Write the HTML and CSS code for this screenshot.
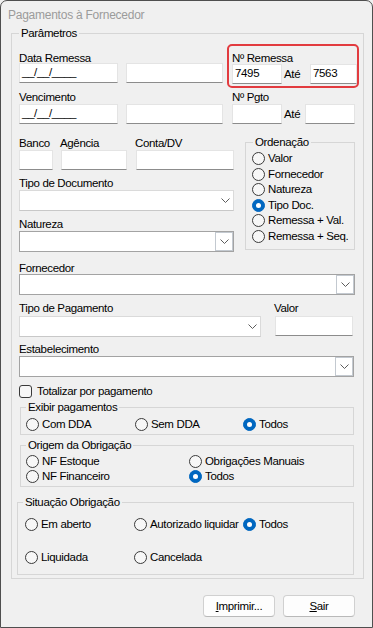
FILE: index.html
```html
<!DOCTYPE html>
<html lang="pt">
<head>
<meta charset="utf-8">
<title>Pagamentos à Fornecedor</title>
<link rel="stylesheet" href="styles.css">
</head>
<body>
<div class="window">
  <div class="titlebar">Pagamentos à Fornecedor</div>
  <fieldset class="grp params">
    <legend>Parâmetros</legend>

    <div class="row row1">
      <div class="field w99 ml7 pt8">
        <span class="lbl">Data Remessa</span>
        <div class="inp up">__/__/____</div>
      </div>
      <div class="field w97 ml8 pt8">
        <span class="lbl"></span>
        <div class="inp up"></div>
      </div>
      <div class="highlight">
        <span class="lbl">Nº Remessa</span>
        <div class="pair">
          <div class="inp w50">7495</div>
          <span class="ate">Até</span>
          <div class="inp w47 push">7563</div>
        </div>
      </div>
    </div>

    <div class="row row2">
      <div class="field w99 ml7">
        <span class="lbl">Vencimento</span>
        <div class="inp dn">__/__/____</div>
      </div>
      <div class="field w97 ml8">
        <span class="lbl"></span>
        <div class="inp dn"></div>
      </div>
      <div class="field pgto">
        <span class="lbl">Nº Pgto</span>
        <div class="pair dn">
          <div class="inp w50"></div>
          <span class="ate">Até</span>
          <div class="inp w50 push"></div>
        </div>
      </div>
    </div>

    <div class="mid">
      <div class="midleft">
        <div class="bankrow">
          <div class="field w34">
            <span class="lbl">Banco</span>
            <div class="inp dn"></div>
          </div>
          <div class="field w66 ml8">
            <span class="lbl lbl-ag">Agência</span>
            <div class="inp dn"></div>
          </div>
          <div class="field w98 ml9">
            <span class="lbl lbl-ag">Conta/DV</span>
            <div class="inp dn"></div>
          </div>
        </div>
        <div class="field mt7">
          <span class="lbl">Tipo de Documento</span>
          <div class="combo plain dn">
            <svg class="chev" width="9" height="5" viewBox="0 0 9 5"><path d="M0.5 0.5 L4.5 4.5 L8.5 0.5" fill="none" stroke="#5c5c5c" stroke-width="1"/></svg>
          </div>
        </div>
        <div class="field mt7">
          <span class="lbl">Natureza</span>
          <div class="combo boxed dn">
            <span class="cbtn"><svg width="9" height="5" viewBox="0 0 9 5"><path d="M0.5 0.5 L4.5 4.5 L8.5 0.5" fill="none" stroke="#5c5c5c" stroke-width="1"/></svg></span>
          </div>
        </div>
      </div>

      <fieldset class="grp ord">
        <legend>Ordenação</legend>
        <div class="ordlist">
          <div class="radio"><span class="dot"></span>Valor</div>
          <div class="radio"><span class="dot"></span>Fornecedor</div>
          <div class="radio"><span class="dot"></span>Natureza</div>
          <div class="radio on"><span class="dot"></span>Tipo Doc.</div>
          <div class="radio"><span class="dot"></span>Remessa + Val.</div>
          <div class="radio"><span class="dot"></span>Remessa + Seq.</div>
        </div>
      </fieldset>
    </div>

    <div class="field forn">
      <span class="lbl">Fornecedor</span>
      <div class="combo boxed">
        <span class="cbtn"><svg width="9" height="5" viewBox="0 0 9 5"><path d="M0.5 0.5 L4.5 4.5 L8.5 0.5" fill="none" stroke="#5c5c5c" stroke-width="1"/></svg></span>
      </div>
    </div>

    <div class="row rowpag">
      <div class="field w242 ml7">
        <span class="lbl">Tipo de Pagamento</span>
        <div class="combo plain dn2">
          <svg class="chev" width="9" height="5" viewBox="0 0 9 5"><path d="M0.5 0.5 L4.5 4.5 L8.5 0.5" fill="none" stroke="#5c5c5c" stroke-width="1"/></svg>
        </div>
      </div>
      <div class="field valor">
        <span class="lbl">Valor</span>
        <div class="inp dn2 valinp"></div>
      </div>
    </div>

    <div class="field estab">
      <span class="lbl">Estabelecimento</span>
      <div class="combo boxed dn">
        <span class="cbtn"><svg width="9" height="5" viewBox="0 0 9 5"><path d="M0.5 0.5 L4.5 4.5 L8.5 0.5" fill="none" stroke="#5c5c5c" stroke-width="1"/></svg></span>
      </div>
    </div>

    <div class="check"><span class="box"></span>Totalizar por pagamento</div>

    <fieldset class="grp sub exibir">
      <legend>Exibir pagamentos</legend>
      <div class="opts cols3a">
        <div class="radio"><span class="dot"></span>Com DDA</div>
        <div class="radio"><span class="dot"></span>Sem DDA</div>
        <div class="radio on"><span class="dot"></span>Todos</div>
      </div>
    </fieldset>

    <fieldset class="grp sub origem">
      <legend>Origem da Obrigação</legend>
      <div class="opts cols2">
        <div class="radio"><span class="dot"></span>NF Estoque</div>
        <div class="radio"><span class="dot"></span>Obrigações Manuais</div>
        <div class="radio"><span class="dot"></span>NF Financeiro</div>
        <div class="radio on"><span class="dot"></span>Todos</div>
      </div>
    </fieldset>

    <fieldset class="grp situacao">
      <legend>Situação Obrigação</legend>
      <div class="opts cols3b">
        <div class="radio"><span class="dot"></span>Em aberto</div>
        <div class="radio"><span class="dot"></span>Autorizado liquidar</div>
        <div class="radio on"><span class="dot"></span>Todos</div>
        <div class="radio"><span class="dot"></span>Liquidada</div>
        <div class="radio"><span class="dot"></span>Cancelada</div>
      </div>
    </fieldset>
  </fieldset>

  <div class="buttons">
    <div class="btn"><span><u>I</u>mprimir...</span></div>
    <div class="btn"><span><u>S</u>air</span></div>
  </div>
</div>
</body>
</html>
```

FILE: styles.css
```css
* { box-sizing: border-box; }
html, body { margin: 0; padding: 0; background: #f0f0f0; }
body {
  font-family: "Liberation Sans", Arial, sans-serif;
  font-size: 11.5px;
  letter-spacing: -0.35px;
  color: #000;
}
.window {
  width: 373px;
  height: 628px;
  border: 1px solid #4f4f4f;
  border-radius: 7px 7px 0 0;
  background: #f0f0f0;
  overflow: hidden;
}
.titlebar {
  height: 26px;
  padding: 2px 0 0 7px;
  line-height: 24px;
  font-size: 12px;
  letter-spacing: -0.25px;
  color: #9b9b9b;
}

/* group boxes */
fieldset.grp {
  margin: 0;
  padding: 0;
  border: 1px solid #d6d6d6;
  min-width: 0;
}
fieldset.grp > legend {
  padding: 0 2px;
  height: 12px;
  line-height: 12px;
  margin-left: 7px;
  white-space: nowrap;
}
fieldset.grp.params {
  margin-left: 10px;
  width: 353px;
  padding-bottom: 3px;
}

/* generic */
.row { display: flex; align-items: flex-start; }
.field { display: flex; flex-direction: column; }
.lbl { display: block; height: 12px; line-height: 12px; white-space: nowrap; }
.ml7 { margin-left: 7px; }
.ml8 { margin-left: 8px; }
.ml9 { margin-left: 9px; }
.mt7 { margin-top: 7px; }
.pt8 { padding-top: 8px; }
.w34 { width: 34px; }
.w47 { width: 47px; }
.w50 { width: 50px; }
.w66 { width: 66px; }
.w97 { width: 97px; }
.w98 { width: 98px; }
.w99 { width: 99px; }
.w242 { width: 242px; }

.inp {
  height: 20px;
  background: #fff;
  border: 1px solid #e4e4e4;
  border-bottom-color: #8c8c8c;
  padding: 0 2px;
  line-height: 16px;
  white-space: nowrap;
  overflow: hidden;
}
.up { margin-top: -1px; }
.dn { margin-top: 1px; }
.dn2 { margin-top: 2px; }

.pair { display: flex; align-items: flex-start; }
.ate { line-height: 20px; margin-left: 2px; }
.push { margin-left: auto; }

/* row 1 */
.row1 { margin-top: 5px; height: 44px; }
.highlight {
  margin-left: 4px;
  width: 132px;
  height: 44px;
  border: 2px solid #e23b3f;
  border-radius: 5px;
  padding: 6px 0 0 3px;
}

/* row 2 */
.row2 { margin-top: 3px; }
.pgto { margin-left: 9px; width: 123px; }

/* middle area */
.mid {
  display: grid;
  grid-template-columns: 215px 110px;
  column-gap: 11px;
  margin-left: 7px;
  align-items: start;
}
.midleft { padding-top: 13px; }
.bankrow { display: flex; }
.lbl-ag { margin-left: -1px; }

.combo {
  height: 21px;
  background: #fff;
  display: flex;
  align-items: center;
  justify-content: flex-end;
}
.combo.plain { border: 1px solid #dadada; border-bottom-color: #c8c8c8; padding-right: 3px; }
.combo.boxed { border: 1px solid #a3a3a3; }
.cbtn {
  width: 18px;
  height: 19px;
  border: 1px solid #c3c9d0;
  display: flex;
  align-items: center;
  justify-content: center;
  background: #fff;
}
.chev, .cbtn svg { display: block; }

fieldset.grp.ord { margin-top: 12px; }
fieldset.grp.ord > legend { margin-left: 7px; }
.ordlist { padding: 3px 0 5px 6px; }
.ordlist .radio { height: 15.5px; }

/* radios */
.radio {
  display: flex;
  align-items: center;
  white-space: nowrap;
  line-height: 13px;
}
.dot {
  flex: none;
  width: 13px;
  height: 13px;
  border: 1px solid #3a3a3a;
  border-radius: 50%;
  background: #f7f7f7;
  margin-right: 3px;
  position: relative;
}
.radio.on .dot { background: #0067c0; border-color: #0067c0; }
.radio.on .dot::after {
  content: "";
  position: absolute;
  left: 3px;
  top: 3px;
  width: 5px;
  height: 5px;
  border-radius: 50%;
  background: #fff;
}

/* lower fields */
.forn { margin: 10px 0 0 7px; width: 336px; }
.rowpag { margin-top: 7px; }
.valor { margin-left: 13px; width: 79px; }
.valinp { margin-left: 1px; width: 78px; }
.estab { margin: 6px 0 0 7px; width: 335px; }

.check {
  margin: 8px 0 0 7px;
  height: 13px;
  display: flex;
  align-items: center;
  line-height: 13px;
}
.check .box {
  width: 13px;
  height: 13px;
  border: 1px solid #3a3a3a;
  border-radius: 3px;
  background: #f7f7f7;
  margin-right: 5px;
}

fieldset.grp.sub { margin-left: 8px; width: 334px; }
fieldset.grp.sub > legend { margin-left: 5px; }
fieldset.grp.exibir { margin-top: 3px; }
fieldset.grp.origem { margin-top: 4px; }
fieldset.grp.situacao { margin: 9px 0 0 5px; width: 337px; }
fieldset.grp.situacao > legend { margin-left: 5px; }

.opts { display: grid; }
.cols3a { grid-template-columns: 109px 108px auto; grid-auto-rows: 15px; padding: 4px 0 2px 5px; }
.cols2 { grid-template-columns: 163px auto; grid-auto-rows: 15px; padding: 3px 0 2px 5px; }
.cols3b { grid-template-columns: 109px 109px auto; grid-auto-rows: 33px; padding: 0 0 0 7px; }

/* buttons */
.buttons {
  display: flex;
  justify-content: flex-end;
  gap: 8px;
  margin-top: 16px;
  padding-right: 17px;
}
.btn {
  width: 72px;
  height: 22px;
  border: 1px solid #d0d0d0;
  border-bottom-color: #b9b9b9;
  border-radius: 4px;
  background: #fdfdfd;
  display: flex;
  align-items: center;
  justify-content: center;
  line-height: 13px;
}
.btn u { text-decoration: underline; text-underline-offset: 1px; }
```
